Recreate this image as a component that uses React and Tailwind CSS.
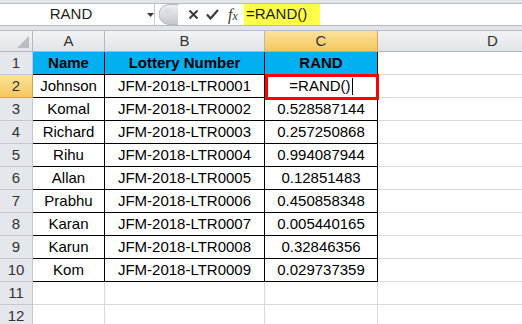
import React from 'react';

const COLS = [
  { key: 'A', w: 72 },
  { key: 'B', w: 160 },
  { key: 'C', w: 113 },
  { key: 'D', w: 230 },
];

const ROWS = [
  ['Johnson', 'JFM-2018-LTR0001', ''],
  ['Komal', 'JFM-2018-LTR0002', '0.528587144'],
  ['Richard', 'JFM-2018-LTR0003', '0.257250868'],
  ['Rihu', 'JFM-2018-LTR0004', '0.994087944'],
  ['Allan', 'JFM-2018-LTR0005', '0.12851483'],
  ['Prabhu', 'JFM-2018-LTR0006', '0.450858348'],
  ['Karan', 'JFM-2018-LTR0007', '0.005440165'],
  ['Karun', 'JFM-2018-LTR0008', '0.32846356'],
  ['Kom', 'JFM-2018-LTR0009', '0.029737359'],
];

const FormulaBar = () => (
  <div className="h-[30px] bg-[#e1e5ea] pt-[3px] pb-[4px]">
    <div className="flex h-[23px] border-y border-[#b7bcc3] bg-white">
      {/* ===== NAME BOX ===== */}
      <div className="relative flex w-[155px] shrink-0 items-center border-r border-[#c9cdd2]">
        <span className="w-[142px] text-center text-[15px] text-[#1e1e1e]">RAND</span>
        <svg className="absolute left-[147px] top-[9px]" width="7" height="4" viewBox="0 0 7 4">
          <path d="M0 0 H7 L3.5 4 Z" fill="#3a3a3a" />
        </svg>
      </div>

      {/* ===== BUTTONS ===== */}
      <div className="flex w-[89px] shrink-0 items-center">
        <svg className="ml-[4px]" width="19" height="21" viewBox="0 0 19 21">
          <defs>
            <linearGradient id="knob" x1="0" y1="0" x2="0" y2="1">
              <stop offset="0" stopColor="#eef0f2" />
              <stop offset="1" stopColor="#c3c7cc" />
            </linearGradient>
          </defs>
          <path d="M19 0.5 H10 A10 10 0 0 0 10 20.5 H19" fill="url(#knob)" stroke="#b4b9bf" />
          <ellipse cx="9" cy="7" rx="4" ry="2.5" fill="#d9dce0" />
        </svg>
        <svg className="ml-[10px]" width="11" height="11" viewBox="0 0 11 11">
          <path d="M1.5 1.5 L9.5 9.5 M9.5 1.5 L1.5 9.5" stroke="#3c3c3c" strokeWidth="2" />
        </svg>
        <svg className="ml-[7px]" width="13" height="11" viewBox="0 0 13 11">
          <path d="M1 5.5 L4.5 9.5 L12 1" stroke="#3c3c3c" strokeWidth="2.2" fill="none" />
        </svg>
        <span
          className="ml-[9px] text-[16px] italic text-[#3c3c3c]"
          style={{ fontFamily: '"Liberation Serif", serif' }}
        >
          f<span className="text-[12px]">x</span>
        </span>
      </div>

      {/* ===== FORMULA ===== */}
      <div className="flex w-[76px] shrink-0 items-center bg-[#ffff4a] pl-[2px] text-[15px] text-[#1e1e1e]">
        =RAND()
      </div>
    </div>
  </div>
);

const ColumnHeaders = () => (
  <div className="flex h-[22px] border-t border-[#b9bec5]">
    <div className="relative w-[33px] shrink-0 border-r border-b border-[#b2b8bf] bg-gradient-to-b from-[#f2f3f5] to-[#e1e4e8]">
      <svg className="absolute right-[3px] bottom-[3px]" width="12" height="12" viewBox="0 0 12 12">
        <path d="M12 0 V12 H0 Z" fill="#b8bcc2" />
      </svg>
    </div>
    {COLS.map((c) =>
      c.key === 'C' ? (
        <div
          key={c.key}
          className="flex shrink-0 items-center justify-center border-r border-b border-[#e3a047] bg-gradient-to-b from-[#fbe39b] to-[#f5c75c] text-[15px] text-[#333]"
          style={{ width: c.w }}
        >
          {c.key}
        </div>
      ) : (
        <div
          key={c.key}
          className="flex shrink-0 items-center justify-center border-r border-b border-[#b2b8bf] bg-gradient-to-b from-[#f2f3f5] to-[#e1e4e8] text-[15px] text-[#333]"
          style={{ width: c.w }}
        >
          {c.key}
        </div>
      )
    )}
  </div>
);

const RowHeader = ({ n, active }) => (
  <div
    className={
      active
        ? 'flex w-[33px] shrink-0 items-center justify-center border-r border-b border-[#e3a047] bg-gradient-to-b from-[#fbe39b] to-[#f5c75c] text-[15px] text-[#333]'
        : 'flex w-[33px] shrink-0 items-center justify-center border-r border-b border-[#c3c8ce] bg-[#e4e7eb] text-[15px] text-[#333]'
    }
  >
    {n}
  </div>
);

const Cell = ({ w, children, bold, blue, framed }) => (
  <div
    className={[
      'flex shrink-0 items-center justify-center border-r border-b text-[15px] text-black',
      framed ? 'border-black' : 'border-[#d9d9d9]',
      blue ? 'bg-[#00b0f0]' : 'bg-white',
      bold ? 'font-bold' : '',
    ].join(' ')}
    style={{ width: w }}
  >
    {children}
  </div>
);

export default function App() {
  return (
    <div
      className="relative h-[324px] w-[522px] overflow-hidden bg-white"
      style={{ fontFamily: '"Liberation Sans", Arial, sans-serif' }}
    >
      <FormulaBar />
      <ColumnHeaders />

      {/* ===== GRID ===== */}
      <div className="flex h-[23px]">
        <RowHeader n={1} />
        <Cell w={72} bold blue framed>Name</Cell>
        <Cell w={160} bold blue framed>Lottery Number</Cell>
        <Cell w={113} bold blue framed>RAND</Cell>
        <Cell w={230} />
      </div>
      {ROWS.map((r, i) => (
        <div key={i} className="flex h-[23px]">
          <RowHeader n={i + 2} active={i === 0} />
          <Cell w={72} framed>{r[0]}</Cell>
          <Cell w={160} framed>{r[1]}</Cell>
          <Cell w={113} framed>
            {i === 0 ? (
              <span className="flex items-center">
                =RAND()
                <span className="ml-[1px] h-[17px] w-[1px] bg-black" />
              </span>
            ) : (
              r[2]
            )}
          </Cell>
          <Cell w={230} />
        </div>
      ))}
      {[11, 12].map((n) => (
        <div key={n} className="flex h-[23px]">
          <RowHeader n={n} />
          <Cell w={72} />
          <Cell w={160} />
          <Cell w={113} />
          <Cell w={230} />
        </div>
      ))}

      {/* ===== SELECTION ===== */}
      <div className="pointer-events-none absolute left-[265px] top-[74px] h-[26px] w-[114px] border-[3px] border-[#ff0000]" />
    </div>
  );
}
